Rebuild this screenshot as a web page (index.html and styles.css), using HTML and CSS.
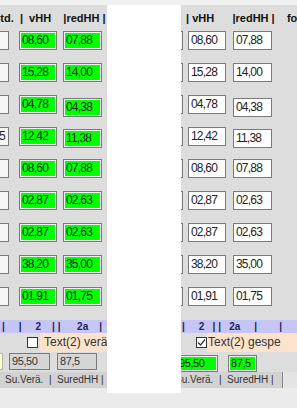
FILE: index.html
```html
<!DOCTYPE html>
<html lang="de">
  <head>
    <meta charset="UTF-8" />
    <title>Werte</title>
    <link rel="stylesheet" href="styles.css">
  </head>
  <body>
    <div class="top-strip"></div>
    <div class="main">
      <!-- left grid: changed values (green) -->
      <div class="panel panel-left">
        <div class="head head-left">Std.  |  vHH    |redHH |</div>
        <div class="rows">
          <div class="row"><div class="box prev"></div><div class="box vhh green">08,60</div><div class="box red green">07,88</div></div>
          <div class="row"><div class="box prev"></div><div class="box vhh green">15,28</div><div class="box red green">14,00</div></div>
          <div class="row"><div class="box prev"></div><div class="box vhh green">04,78</div><div class="box red green low3">04,38</div></div>
          <div class="row"><div class="box prev">11,25</div><div class="box vhh green">12,42</div><div class="box red green low2">11,38</div></div>
          <div class="row"><div class="box prev"></div><div class="box vhh green">08,60</div><div class="box red green">07,88</div></div>
          <div class="row"><div class="box prev"></div><div class="box vhh green">02,87</div><div class="box red green">02,63</div></div>
          <div class="row"><div class="box prev"></div><div class="box vhh green">02,87</div><div class="box red green">02,63</div></div>
          <div class="row"><div class="box prev"></div><div class="box vhh green">38,20</div><div class="box red green">35,00</div></div>
          <div class="row"><div class="box prev"></div><div class="box vhh green">01,91</div><div class="box red green">01,75</div></div>
        </div>
        <div class="bar bar-left">|     |     2    | |      2a    |</div>
        <div class="check check-left">
          <span class="cb"></span>
          <span class="check-label">Text(2) verän</span>
        </div>
        <div class="sums sums-left">
          <div class="sum sum-prev"></div>
          <div class="sum sum-a">95,50</div>
          <div class="sum sum-b">87,5</div>
        </div>
        <div class="labels labels-left"><span>Su.Verä.  |  SuredHH |</span></div>
        <div class="panel-foot"></div>
      </div>

      <div class="blank"></div>

      <!-- right grid: stored values (white) -->
      <div class="panel panel-right">
        <div class="head head-right">| vHH      |redHH |    fo</div>
        <div class="rows">
          <div class="row"><div class="box prev"></div><div class="box vhh">08,60</div><div class="box red">07,88</div></div>
          <div class="row"><div class="box prev"></div><div class="box vhh">15,28</div><div class="box red">14,00</div></div>
          <div class="row"><div class="box prev"></div><div class="box vhh">04,78</div><div class="box red low3">04,38</div></div>
          <div class="row"><div class="box prev"></div><div class="box vhh">12,42</div><div class="box red low2">11,38</div></div>
          <div class="row"><div class="box prev"></div><div class="box vhh">08,60</div><div class="box red">07,88</div></div>
          <div class="row"><div class="box prev"></div><div class="box vhh">02,87</div><div class="box red">02,63</div></div>
          <div class="row"><div class="box prev"></div><div class="box vhh">02,87</div><div class="box red">02,63</div></div>
          <div class="row"><div class="box prev"></div><div class="box vhh">38,20</div><div class="box red">35,00</div></div>
          <div class="row"><div class="box prev"></div><div class="box vhh">01,91</div><div class="box red">01,75</div></div>
        </div>
        <div class="bar bar-right">|     2   | |   2a     |        |</div>
        <div class="check check-right">
          <span class="cb">
            <svg width="9" height="9" viewBox="0 0 9 9" fill="none" stroke="#333" stroke-width="1.2">
              <polyline points="1 4.5 3.5 7 8 1.5"></polyline>
            </svg>
          </span>
          <span class="check-label">Text(2) gespe</span>
        </div>
        <div class="sums sums-right">
          <div class="sum sum-a green">95,50</div>
          <div class="sum sum-b green">87,5</div>
        </div>
        <div class="labels labels-right"><span>Su.Verä.  |  SuredHH |</span><span class="label-end"></span></div>
        <div class="panel-foot"></div>
      </div>
    </div>
    <div class="page-foot"></div>
  </body>
</html>
```

FILE: styles.css
```css
body {
  margin: 0;
  width: 297px;
  height: 408px;
  overflow: hidden;
  background-color: #ebebeb;
  font-family: "Liberation Sans", Arial, sans-serif;
  color: #222;
}

.top-strip {
  height: 5px;
  background-color: #f0f0f0;
}

.main {
  display: flex;
  height: 388px;
}

.panel {
  display: flex;
  flex-direction: column;
  overflow: hidden;
  background-color: #dddddd;
}

.panel-left {
  width: 107px;
}

.panel-right {
  width: 116px;
}

.blank {
  width: 74px;
  background-color: #fff;
}

.head {
  height: 26px;
  box-sizing: border-box;
  padding-top: 6px;
  font-size: 11px;
  font-weight: bold;
  line-height: 14px;
  white-space: pre;
  color: #111;
  flex-shrink: 0;
}

.head-left {
  margin-left: -7px;
}

.head-right {
  padding-left: 5px;
}

.rows {
  flex-shrink: 0;
}

.row {
  display: flex;
  align-items: flex-start;
  height: 32px;
}

.box {
  box-sizing: border-box;
  flex-shrink: 0;
  height: 19px;
  padding-left: 2px;
  border: 1px solid #7a7a7a;
  background-color: #fff;
  font-size: 12px;
  letter-spacing: -0.8px;
  line-height: 17px;
  white-space: nowrap;
  overflow: hidden;
}

.box.prev {
  width: 40px;
  background-color: #f6f6f6;
  text-align: right;
  padding-right: 3px;
}

.box.vhh {
  width: 38px;
}

.box.red {
  width: 39px;
}

.panel-left .prev {
  margin-left: -31px;
}

.panel-left .vhh {
  margin-left: 10px;
}

.panel-left .red {
  margin-left: 6px;
}

.panel-right .prev {
  margin-left: -38px;
}

.panel-right .vhh {
  margin-left: 5px;
}

.panel-right .red {
  margin-left: 7px;
}

.low3 {
  margin-top: 3px;
}

.low2 {
  margin-top: 2px;
}

.green {
  background-color: #00ff00;
  box-shadow: inset 0 0 0 1px #eef5ee;
}

.bar {
  height: 13px;
  margin-top: 1px;
  background-color: #c6c6f6;
  color: #23235f;
  font-size: 10px;
  font-weight: bold;
  line-height: 13px;
  white-space: pre;
  flex-shrink: 0;
}

.bar-left {
  padding-left: 2px;
}

.bar-right {
  padding-left: 1px;
}

.check {
  display: flex;
  align-items: center;
  height: 19px;
  flex-shrink: 0;
}

.cb {
  box-sizing: border-box;
  width: 11px;
  height: 11px;
  border: 1px solid #333;
  background-color: #fff;
  display: flex;
  align-items: center;
  justify-content: center;
  flex-shrink: 0;
}

.check-label {
  flex: 1;
  height: 19px;
  background-color: #fde3cd;
  font-size: 12px;
  line-height: 19px;
  white-space: nowrap;
  color: #333;
}

.check-left .cb {
  margin-left: 27px;
}

.check-left .check-label {
  margin-left: 2px;
  padding-left: 4px;
}

.check-right .cb {
  margin-left: 15px;
}

.check-right .check-label {
  padding-left: 1px;
}

.sums {
  display: flex;
  align-items: flex-start;
  height: 20px;
  box-sizing: border-box;
  padding-top: 1px;
  flex-shrink: 0;
}

.sums-right {
  padding-top: 3px;
}

.sum {
  box-sizing: border-box;
  flex-shrink: 0;
  height: 17px;
  padding-left: 2px;
  border: 1px solid #7a7a7a;
  background-color: #d6d6d6;
  font-size: 11px;
  letter-spacing: -0.4px;
  line-height: 15px;
  color: #333;
  white-space: nowrap;
  overflow: hidden;
}

.sum-prev {
  width: 40px;
  margin-left: -37px;
  background-color: #ffffd0;
  border-color: #b8b8a0;
}

.sums-left .sum-a {
  width: 41px;
  margin-left: 6px;
}

.sums-left .sum-b {
  width: 40px;
  margin-left: 7px;
}

.sums-right .sum-a {
  width: 42px;
  margin-left: -5px;
}

.sums-right .sum-b {
  width: 29px;
  margin-left: 10px;
}

.sums .green {
  background-color: #00ff00;
  color: #222;
}

.labels {
  display: flex;
  height: 16px;
  background-color: #d2d2d2;
  font-size: 10px;
  line-height: 16px;
  white-space: pre;
  color: #333;
  flex-shrink: 0;
}

.labels-left {
  padding-left: 5px;
}

.labels-right span:first-child {
  margin-left: -6px;
}

.label-end {
  margin-left: auto;
  width: 14px;
  border-left: 1px solid #888;
  background-color: #e4e4e4;
}

.panel-foot {
  flex: 1;
  background-color: #ebebeb;
}

.page-foot {
  height: 15px;
  background-color: #ebebeb;
}
```
